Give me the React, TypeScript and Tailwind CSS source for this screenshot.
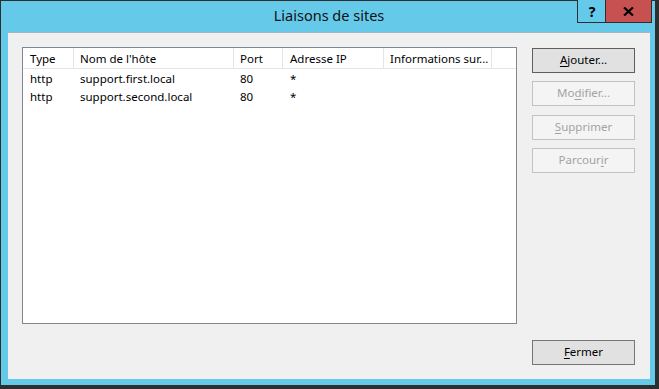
import React from "react";

const font = { fontFamily: '"Noto Sans", "Open Sans", sans-serif' };

function Btn({
  children,
  disabled,
  def,
}: {
  children: React.ReactNode;
  disabled?: boolean;
  def?: boolean;
}) {
  return (
    <div
      className={
        "h-[25px] w-[103px] flex items-center justify-center text-[11.5px] leading-none border " +
        (disabled
          ? "border-[#c2c2c2] bg-[#f4f4f4] text-[#a3a3a3]"
          : def
          ? "border-[#5e5e5e] bg-[#e1e1e1] text-black"
          : "border-[#767676] bg-[#e1e1e1] text-black")
      }
    >
      <span className="-mt-[1px]">{children}</span>
    </div>
  );
}

const U = ({ c }: { c: string }) => (
  <span className="underline underline-offset-[2px] decoration-[1px]">{c}</span>
);

const cols = [
  { label: "Type", w: 51, pl: 7 },
  { label: "Nom de l'hôte", w: 160, pl: 6 },
  { label: "Port", w: 49, pl: 6 },
  { label: "Adresse IP", w: 101, pl: 7 },
  { label: "Informations sur...", w: 108, pl: 6 },
];

const rows = [
  ["http", "support.first.local", "80", "*", ""],
  ["http", "support.second.local", "80", "*", ""],
];

export default function App() {
  return (
    <div
      className="relative w-[659px] h-[389px] bg-[#2e2e2e] pl-[1px] pt-[1px] pr-[4px] pb-[4px]"
      style={font}
    >
      <div className="w-full h-full bg-[#65c9ea] flex flex-col">
        <div className="h-[31px] flex items-center justify-center text-[14.5px] text-[#111] pl-[2px] pb-[1px]">
          Liaisons de sites
        </div>
        <div className="flex-1 ml-[7px] mr-[5px] mb-[6px] bg-[#f0f0f0] border-t border-[#a8b4bc] flex pl-[14px] pt-[14px] pr-[15px] pb-[14px] gap-[15px]">
          <div className="w-[495px] h-[277px] bg-white border border-[#828790] text-[11.5px] text-black">
            <div className="flex h-[21px] border-b border-[#e5e5e5]">
              {cols.map((c) => (
                <div
                  key={c.label}
                  className="h-full border-r border-[#e5e5e5] flex items-center whitespace-nowrap overflow-hidden pt-[1px]"
                  style={{ width: c.w, paddingLeft: c.pl }}
                >
                  {c.label}
                </div>
              ))}
            </div>
            {rows.map((r, i) => (
              <div key={i} className="flex h-[18px] items-center pt-[2px]">
                {r.map((v, j) => (
                  <div
                    key={j}
                    className="whitespace-nowrap"
                    style={{ width: cols[j].w, paddingLeft: cols[j].pl }}
                  >
                    {v}
                  </div>
                ))}
              </div>
            ))}
          </div>
          <div className="flex flex-col w-[103px] pt-[1px]">
            <Btn def>
              <U c="A" />
              jouter...
            </Btn>
            <div className="h-[8px]" />
            <Btn disabled>
              Mo
              <U c="d" />
              ifier...
            </Btn>
            <div className="h-[9px]" />
            <Btn disabled>
              <U c="S" />
              upprimer
            </Btn>
            <div className="h-[8px]" />
            <Btn disabled>
              Parcour
              <U c="i" />r
            </Btn>
            <div className="mt-auto">
              <Btn>
                <U c="F" />
                ermer
              </Btn>
            </div>
          </div>
        </div>
      </div>
      <div className="absolute left-[577px] top-0 w-[29px] h-[23px] bg-[#65c9ea] border-l border-b border-[#2e2e2e] flex items-center justify-center text-[14px] font-bold text-black">
        ?
      </div>
      <div className="absolute left-[605px] top-0 w-[47px] h-[23px] bg-[#c75050] border border-t-0 border-[#2e2e2e] flex items-center justify-center">
        <svg width="11" height="9" viewBox="0 0 11 9">
          <path d="M1 0.5 L10 8.5 M10 0.5 L1 8.5" stroke="#000" strokeWidth="2.2" />
        </svg>
      </div>
    </div>
  );
}
